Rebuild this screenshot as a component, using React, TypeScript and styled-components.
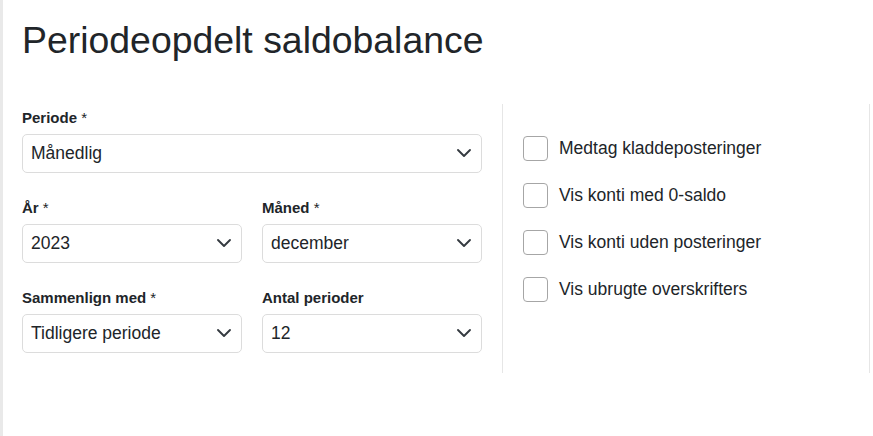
import * as React from 'react';
import styled, { createGlobalStyle } from 'styled-components';

interface ISelectField {
	readonly label: string;
	readonly required?: boolean;
	readonly value: string;
}

const periodField: ISelectField = { label: 'Periode', required: true, value: 'Månedlig' };

const pairRows: ISelectField[][] = [
	[
		{ label: 'År', required: true, value: '2023' },
		{ label: 'Måned', required: true, value: 'december' }
	],
	[
		{ label: 'Sammenlign med', required: true, value: 'Tidligere periode' },
		{ label: 'Antal perioder', value: '12' }
	]
];

const options = [
	'Medtag kladdeposteringer',
	'Vis konti med 0-saldo',
	'Vis konti uden posteringer',
	'Vis ubrugte overskrifters'
];

const Chevron = () => (
	<ChevronSvg viewBox="0 0 16 16" aria-hidden="true">
		<path d="m2 5 6 6 6-6" />
	</ChevronSvg>
);

const SelectBox: React.FC<{ field: ISelectField }> = ({ field }) => (
	<Field>
		<Label>
			{field.label}
			{field.required && <Required> *</Required>}
		</Label>
		<Select tabIndex={0} role="combobox">
			<SelectValue>{field.value}</SelectValue>
			<Chevron />
		</Select>
	</Field>
);

export default function App() {
	return (
		<>
			<GlobalStyle />
			<Page>
				<Title>Periodeopdelt saldobalance</Title>
				<Content>
					<FormColumn>
						<SelectBox field={periodField} />
						{pairRows.map((row, i) => (
							<PairRow key={i}>
								{row.map(f => (
									<SelectBox key={f.label} field={f} />
								))}
							</PairRow>
						))}
					</FormColumn>
					<OptionsPanel>
						{options.map(o => (
							<CheckRow key={o}>
								<CheckBox type="checkbox" />
								<CheckText>{o}</CheckText>
							</CheckRow>
						))}
					</OptionsPanel>
				</Content>
			</Page>
		</>
	);
}

// css
const GlobalStyle = createGlobalStyle`
	html, body {
		margin: 0;
		padding: 0;
		background: #ffffff;
	}
	body {
		font-family: 'Liberation Sans', Arial, sans-serif;
		color: #212529;
		font-size: 17.5px;
	}
`;

const Page = styled.div`
	min-height: 436px;
	box-sizing: border-box;
	border-left: 3px solid #e9e9e9;
	padding: 18px 3px 0 19px;
`;

const Title = styled.h1`
	margin: 0 0 41px;
	font-size: 37.4px;
	font-weight: 400;
	line-height: 1.2;
	color: #212529;
`;

const Content = styled.div`
	display: grid;
	grid-template-columns: 460px 1fr;
	column-gap: 20px;
`;

const FormColumn = styled.div`
	display: flex;
	flex-direction: column;
	gap: 24px;
	padding: 3px 0 20px;
`;

const PairRow = styled.div`
	display: grid;
	grid-template-columns: 1fr 1fr;
	column-gap: 20px;
`;

const Field = styled.div`
	display: flex;
	flex-direction: column;
`;

const Label = styled.label`
	font-size: 15px;
	font-weight: 700;
	line-height: 22px;
	margin-bottom: 5px;
	color: #212529;
`;

const Required = styled.span`
	font-weight: 400;
`;

const Select = styled.div`
	height: 39px;
	box-sizing: border-box;
	display: flex;
	align-items: center;
	justify-content: space-between;
	padding: 0 9px 0 8px;
	border: 1px solid #dcdcdc;
	border-radius: 5px;
	background: #ffffff;
	cursor: pointer;
`;

const SelectValue = styled.span`
	font-size: 17.5px;
	color: #212529;
`;

const ChevronSvg = styled.svg`
	width: 16px;
	height: 16px;
	fill: none;
	stroke: #343a40;
	stroke-width: 1.9;
	stroke-linecap: round;
	stroke-linejoin: round;
`;

const OptionsPanel = styled.div`
	display: flex;
	flex-direction: column;
	gap: 22px;
	padding: 32px 20px 0;
	border-left: 1px solid #e6e6e6;
	border-right: 1px solid #e6e6e6;
`;

const CheckRow = styled.label`
	display: flex;
	align-items: center;
	gap: 11px;
	cursor: pointer;
`;

const CheckBox = styled.input`
	appearance: none;
	margin: 0;
	width: 25px;
	height: 25px;
	box-sizing: border-box;
	border: 1px solid #a6a6a6;
	border-radius: 4px;
	background: #ffffff;
	flex-shrink: 0;
`;

const CheckText = styled.span`
	font-size: 17.5px;
	line-height: 25px;
	color: #212529;
`;
